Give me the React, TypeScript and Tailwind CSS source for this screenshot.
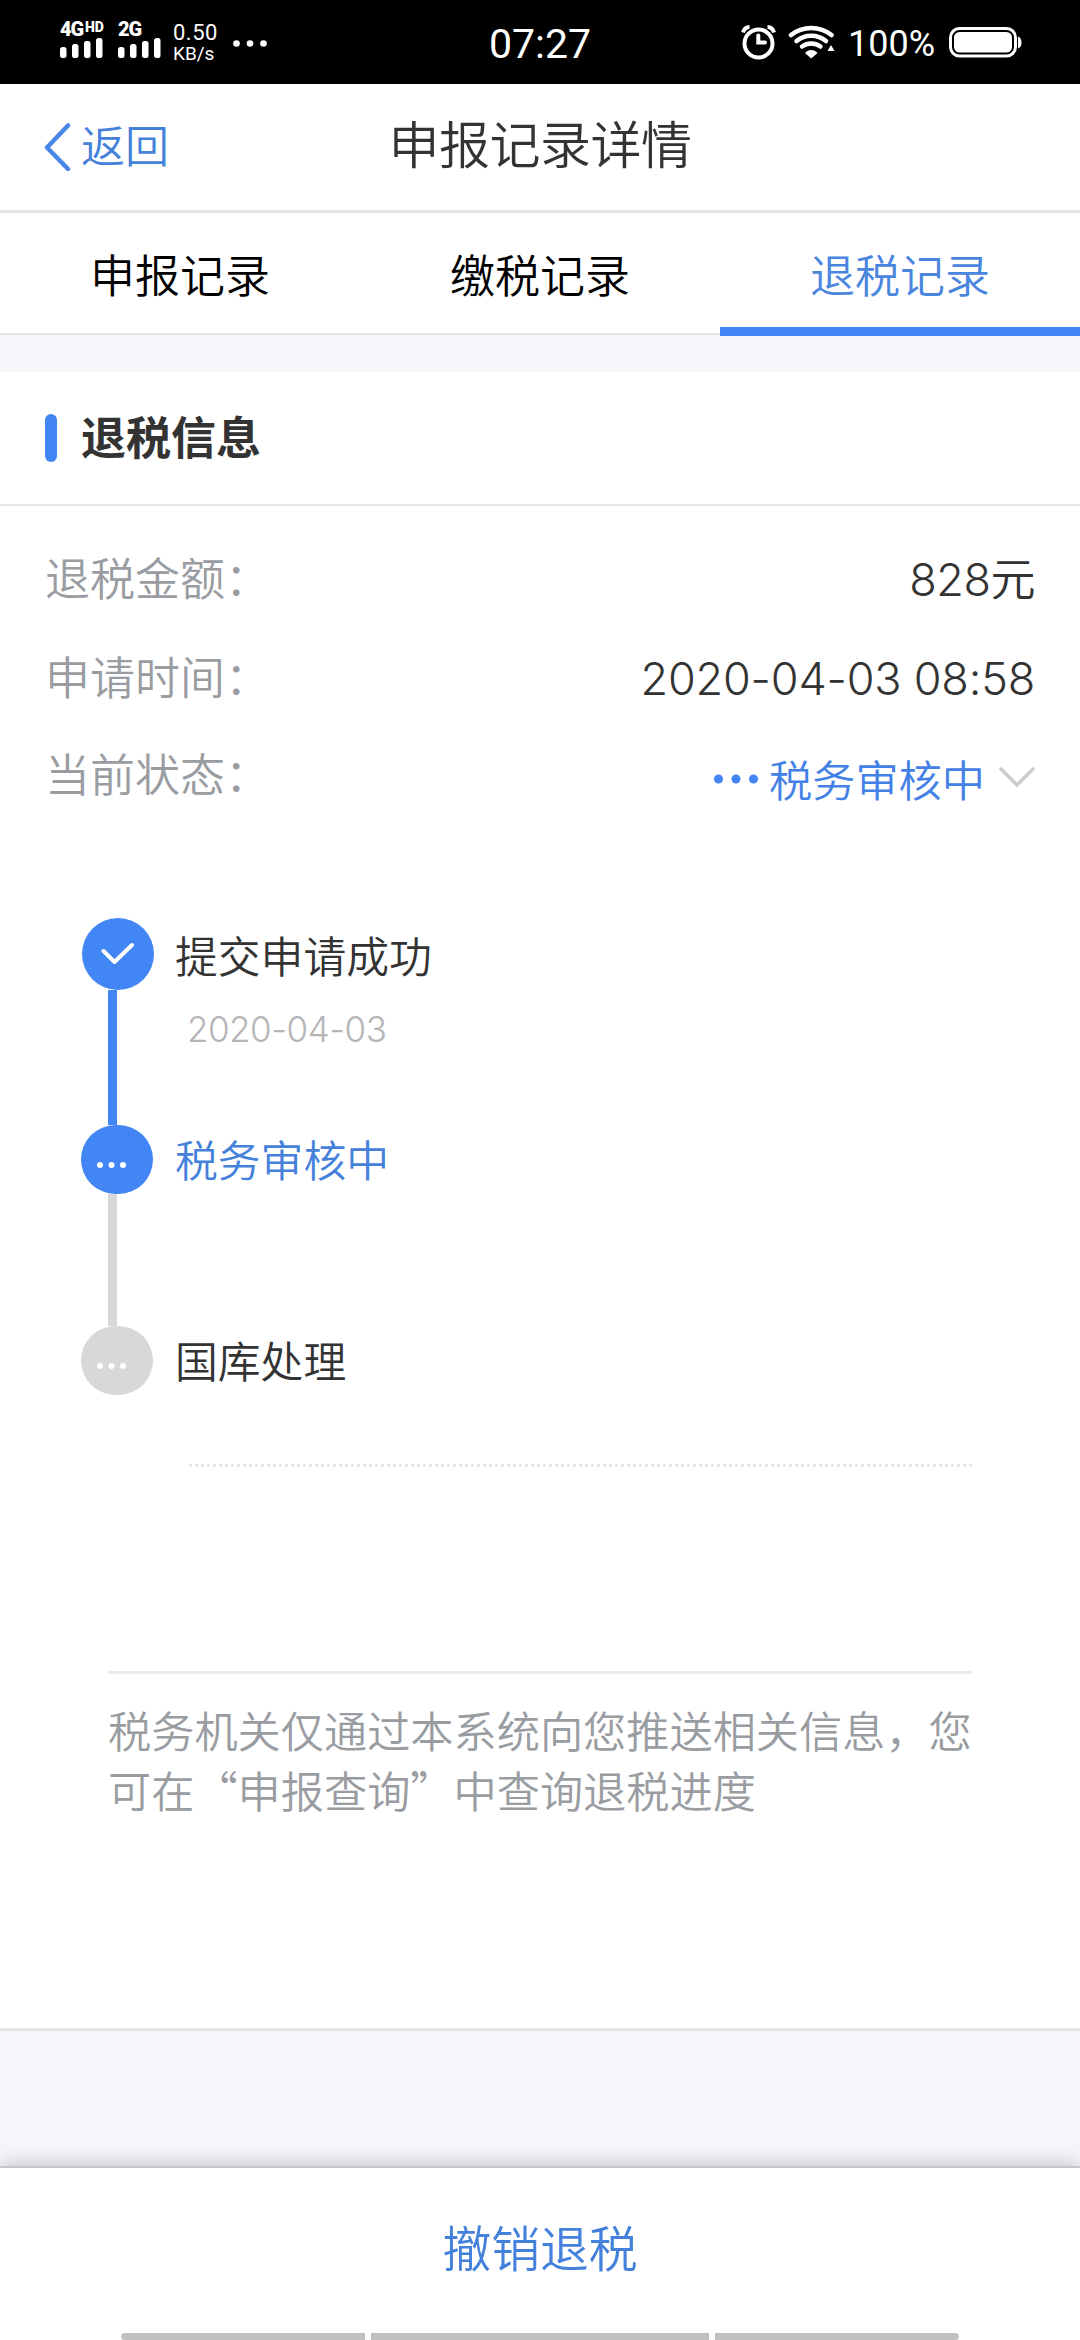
import React from 'react';

const tabs = [
    { label: '申报记录', active: false },
    { label: '缴税记录', active: false },
    { label: '退税记录', active: true },
];

const SignalBars: React.FC = () => (
    <svg width="43" height="20" viewBox="0 0 43 20" fill="#fff">
        <rect x="0" y="9" width="6.5" height="11" rx="2.5" />
        <rect x="12" y="6" width="6.5" height="14" rx="2.5" />
        <rect x="24" y="3" width="6.5" height="17" rx="2.5" />
        <rect x="36" y="0" width="6.5" height="20" rx="2.5" />
    </svg>
);

const StatusBar: React.FC = () => (
    <div className="flex h-[84px] items-start bg-black font-['Roboto','Noto_Sans_CJK_SC',sans-serif] font-normal text-white">
        <div className="ml-[60px] mt-[21px] w-[58px]">
            <div className="flex h-[17px] items-start font-black">
                <span className="w-[25px] text-[20px] leading-[17px] tracking-[-1px]">4G</span>
                <span className="text-[14px] leading-[12px]">HD</span>
            </div>
            <SignalBars />
        </div>
        <div className="mt-[21px] w-[55px]">
            <div className="h-[17px] text-[20px] font-black leading-[17px] tracking-[-1px]">2G</div>
            <SignalBars />
        </div>
        <div className="mt-[21px] w-[60px]">
            <div className="text-[22px] leading-[23px] tracking-[0.5px]">0.50</div>
            <div className="text-[19px] leading-[20px]">KB/s</div>
        </div>
        <svg className="mt-[40px]" width="34" height="7" viewBox="0 0 34 7" fill="#fff">
            <circle cx="3.5" cy="3.5" r="3.3" />
            <circle cx="17" cy="3.5" r="3.3" />
            <circle cx="30.5" cy="3.5" r="3.3" />
        </svg>
        <div className="ml-[222px] mt-[20px] w-[252px] text-[41px] leading-[48px]">07:27</div>
        {/* alarm clock */}
        <svg className="mt-[24px]" width="36" height="38" viewBox="0 0 36 38" fill="none" stroke="#fff">
            <circle cx="17.5" cy="19.5" r="14" strokeWidth="4" />
            <path d="M2 8.5C3 5 5.5 3 8.5 3M33 8.5C32 5 29.5 3 26.5 3" strokeWidth="4" />
            <path d="M17.3 11.5V18.5H24" strokeWidth="4" strokeLinecap="round" />
        </svg>
        {/* wifi */}
        <svg className="ml-[11px] mt-[24px]" width="47" height="38" viewBox="0 0 47 38" fill="none" stroke="#fff">
            <path d="M3 11C14.5 1.5 32 1.5 43.5 11" strokeWidth="4.5" strokeLinecap="round" />
            <path d="M8.5 17C17 10 29.5 10 38 17" strokeWidth="4.5" strokeLinecap="round" />
            <path d="M14 22.5C19.5 18.5 27 18.5 32.5 22.5" strokeWidth="4.5" strokeLinecap="round" />
            <path d="M17 29C20 25 26.5 25 29.5 29L23.2 34.5Z" fill="#fff" strokeWidth="0" />
            <path d="M43 21L46.5 27H39.5Z" fill="#fff" strokeWidth="0" />
        </svg>
        <div className="ml-[13px] mt-[22px] w-[101px] text-[36px] leading-[44px]">100%</div>
        {/* battery */}
        <svg className="mt-[27px]" width="73" height="31" viewBox="0 0 73 31" fill="none">
            <rect x="1.5" y="1.5" width="65" height="27.5" rx="9" stroke="#fff" strokeWidth="3" />
            <rect x="5" y="5" width="58" height="20.5" rx="5.5" fill="#fff" />
            <path d="M69 9.5C71 10 72.5 12 72.5 15.5S71 21 69 21.5Z" fill="#fff" />
        </svg>
    </div>
);

const Header: React.FC = () => (
    <header className="grid h-[129px] grid-cols-3 items-center border-b-[3px] border-[#e3e3e3]">
        <div className="flex items-center pl-[44px] text-[#4381db]">
            <svg width="27" height="48" viewBox="0 0 27 48" fill="none" stroke="#4a86e8" strokeWidth="4.5">
                <path d="M24 2.5L3 24.5L24 46" strokeLinecap="round" strokeLinejoin="round" />
            </svg>
            <span className="ml-[10px] text-[44px] leading-none">返回</span>
        </div>
        <h1 className="whitespace-nowrap pb-[3px] text-center text-[51px] leading-none tracking-[-0.5px]">申报记录详情</h1>
    </header>
);

const Tabs: React.FC = () => (
    <nav className="grid h-[123px] grid-cols-3">
        {tabs.map((tab) => (
            <div
                key={tab.label}
                className={
                    tab.active
                        ? 'h-[123px] border-b-[9px] border-[#4285f4] bg-white text-center text-[45px] leading-[127px] text-[#4a86e0]'
                        : 'h-[122px] border-b-2 border-[#e3e3e3] bg-white text-center text-[45px] leading-[127px] text-black'
                }
            >
                {tab.label}
            </div>
        ))}
    </nav>
);

const Dots: React.FC = () => (
    <svg className="ml-[15px] mt-[11px]" width="32" height="8" viewBox="0 0 32 8" fill="#fff">
        <circle cx="4" cy="4" r="3" />
        <circle cx="15.5" cy="4" r="3" />
        <circle cx="27" cy="4" r="3" />
    </svg>
);

const InfoRows: React.FC = () => (
    <div className="px-[45px] pt-[24px] text-[45px]">
        <div className="flex h-[99px] items-center justify-between">
            <span className="text-[#999ca1]">退税金额：</span>
            <span className="tracking-[-0.5px]">828元</span>
        </div>
        <div className="flex h-[99px] items-center justify-between">
            <span className="text-[#999ca1]">申请时间：</span>
            <span className="tracking-[-0.2px]">2020-04-03 08:58</span>
        </div>
        <div className="flex h-[96px] items-center justify-between">
            <span className="text-[#999ca1]">当前状态：</span>
            <span className="flex items-center pt-[9px] text-[43.2px] leading-none text-[#4381e6]">
                <svg className="-mt-[2px] mr-[10px]" width="46" height="10" viewBox="0 0 46 10" fill="#4285f4">
                    <circle cx="5.5" cy="5" r="4.5" />
                    <circle cx="23" cy="5" r="4.5" />
                    <circle cx="40.5" cy="5" r="4.5" />
                </svg>
                <span className="pt-[2px]">税务审核中</span>
                <svg className="-mt-[6px] ml-[14px]" width="36" height="21" viewBox="0 0 36 21" fill="none" stroke="#cccccc">
                    <path d="M2 2L18 18L34 2" strokeWidth="3.5" strokeLinecap="round" />
                </svg>
            </span>
        </div>
    </div>
);

const Timeline: React.FC = () => (
    <div className="mt-[94px] pl-[81px] text-[42.8px]">
        <div className="flex h-[207px]">
            <div className="flex w-[94px] flex-col">
                <div className="ml-px flex h-[72px] w-[72px] items-center justify-center rounded-full bg-[#4285f4]">
                    <svg width="34" height="24" viewBox="0 0 34 24" fill="none" stroke="#fff">
                        <path d="M2.5 9L13.5 20L31 3" strokeWidth="4" strokeLinecap="round" strokeLinejoin="round" />
                    </svg>
                </div>
                <div className="ml-[27px] w-[9px] grow bg-[#4285f4]" />
            </div>
            <div>
                <div className="leading-[79px]">提交申请成功</div>
                <div className="pl-[12px] text-[35px] leading-[65px] tracking-[-0.5px] text-[#b5b5b8]">2020-04-03</div>
            </div>
        </div>
        <div className="flex h-[201px]">
            <div className="flex w-[94px] flex-col">
                <div className="flex h-[69px] w-[72px] items-center rounded-[35px] bg-[#4285f4]">
                    <Dots />
                </div>
                <div className="ml-[27px] w-[9px] grow bg-[#d8d8d8]" />
            </div>
            <div className="leading-[73px] text-[#4381db]">税务审核中</div>
        </div>
        <div className="flex h-[69px]">
            <div className="w-[94px]">
                <div className="flex h-[69px] w-[72px] items-center rounded-[35px] bg-[#d8d8d8]">
                    <Dots />
                </div>
            </div>
            <div className="leading-[73px]">国库处理</div>
        </div>
    </div>
);

const App: React.FC = () => (
    <div className="flex h-[2340px] w-[1080px] flex-col overflow-hidden bg-[#f4f6fa] font-['Inter','Noto_Sans_CJK_SC',sans-serif] font-[350] text-[#333333]">
        <StatusBar />
        <div className="bg-white">
            <Header />
        </div>
        <Tabs />

        <main className="mt-[36px] flex h-[1659px] flex-col border-b-[3px] border-[#e2e3e5] bg-white">
            <div className="flex h-[134px] items-center border-b-2 border-[#e6e6e6] pl-[45px]">
                <div className="h-[48px] w-[12px] rounded-full bg-[#4285f4]" />
                <h2 className="ml-[24px] text-[45px] font-bold leading-none">退税信息</h2>
            </div>
            <InfoRows />
            <Timeline />
            <svg className="ml-[189px] mt-[69px]" width="783" height="3" viewBox="0 0 783 3">
                <line x1="0" y1="1.5" x2="783" y2="1.5" stroke="#e8e8e8" strokeWidth="3" strokeDasharray="3 3" />
            </svg>
            <p className="mx-[108px] mt-[204px] whitespace-nowrap border-t-[3px] border-[#ebebeb] pt-[25px] font-['Noto_Sans_CJK_SC',sans-serif] text-[43.2px] leading-[60px] text-[#999ca1]">
                税务机关仅通过本系统向您推送相关信息，您
                <br />
                可在“申报查询”中查询退税进度
            </p>
        </main>

        <footer className="mt-[135px] flex grow flex-col justify-between border-t-2 border-[#c4c5ca] bg-white shadow-[0_0_20px_rgba(0,0,0,0.25)]">
            <button className="h-[164px] text-[48.8px] text-[#4381db]">撤销退税</button>
            <div className="flex justify-center gap-[6px]">
                <div className="h-[7px] w-[244px] rounded-l-full bg-[#c1c1c1]" />
                <div className="h-[7px] w-[338px] bg-[#c1c1c1]" />
                <div className="h-[7px] w-[244px] rounded-r-full bg-[#c1c1c1]" />
            </div>
        </footer>
    </div>
);

export default App;
